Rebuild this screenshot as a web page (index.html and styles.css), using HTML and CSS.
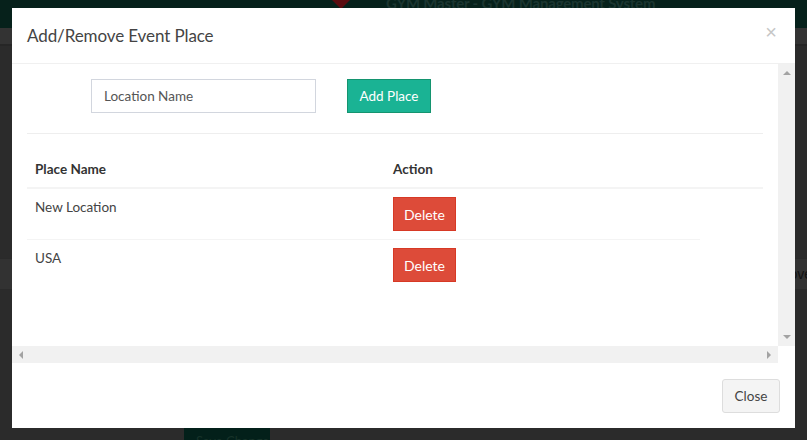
FILE: index.html
```html
<!DOCTYPE html>
<html>
<head>
<meta charset="utf-8">
<title>Add/Remove Event Place</title>
<link rel="stylesheet" href="styles.css">
</head>
<body>
<div class="page">
  <div class="topbar">
    <svg class="logo" width="20" height="10" viewBox="0 0 20 10"><path d="M0 0 H20 L10 10 Z" fill="#5a0c10"/></svg>
    <span class="brand">GYM Master - GYM Management System</span>
  </div>
  <div class="navband"></div>
  <div class="bgrow"><span>Remove</span></div>
  <div class="bgbtn">Save Changes</div>
</div>

<div class="modal">
  <div class="modal-header">
    <h4 class="modal-title">Add/Remove Event Place</h4>
    <span class="close">&times;</span>
  </div>
  <div class="modal-body">
    <div class="scroll-content">
      <div class="form-row">
        <input class="form-input" type="text" placeholder="Location Name">
        <button class="btn btn-add">Add Place</button>
      </div>
      <hr class="divider">
      <table class="places">
        <thead>
          <tr><th class="col-name">Place Name</th><th class="col-action">Action</th><th class="col-rest"></th></tr>
        </thead>
        <tbody>
          <tr><td>New Location</td><td><button class="btn btn-delete">Delete</button></td><td class="rest"></td></tr>
          <tr><td>USA</td><td><button class="btn btn-delete">Delete</button></td><td class="rest"></td></tr>
        </tbody>
      </table>
    </div>
    <div class="vbar">
      <span class="tri tri-up"></span>
      <span class="tri tri-down"></span>
    </div>
    <div class="hbar">
      <span class="tri tri-left"></span>
      <span class="tri tri-right"></span>
    </div>
    <div class="corner"></div>
  </div>
  <div class="modal-footer">
    <button class="btn btn-close">Close</button>
  </div>
</div>
</body>
</html>
```
FILE: styles.css
```css
* { box-sizing: border-box; }
html, body { margin: 0; padding: 0; }
body {
  width: 807px;
  height: 440px;
  overflow: hidden;
  background: #2b2b2b;
  font-family: "Lato", "Liberation Sans", sans-serif;
  font-size: 13.5px;
}

/* background page (dimmed) */
.page { height: 440px; overflow: hidden; }
.topbar {
  height: 28px;
  background: #06211b;
  display: flex;
  align-items: flex-end;
  padding-left: 331px;
  gap: 35px;
  overflow: hidden;
}
.logo { margin-bottom: 19px; }
.brand {
  font-weight: 700;
  font-size: 15px;
  letter-spacing: -0.2px;
  line-height: 16px;
  color: #1b3530;
  margin-bottom: 17px;
  white-space: nowrap;
}
.navband {
  height: 18px;
  background: #333333;
  border-bottom: 2px solid #262626;
}
.bgrow {
  margin-top: 212px;
  height: 32px;
  background: #323232;
  border-top: 1px solid #2a2a2a;
  border-bottom: 1px solid #2a2a2a;
  padding-left: 760px;
  display: flex;
  align-items: center;
  white-space: nowrap;
  overflow: hidden;
  color: #111;
  font-family: "Liberation Sans", sans-serif;
  font-size: 14px;
}
.bgbtn {
  margin-top: 138px;
  margin-left: 184px;
  width: 86px;
  height: 12px;
  overflow: hidden;
  background: #03201a;
  color: #163229;
  padding: 7px 12px 0;
  font-size: 13px;
  line-height: 13px;
  white-space: nowrap;
}

/* modal */
.modal {
  position: fixed;
  left: 12px;
  top: 8px;
  width: 783px;
  height: 420px;
  background: #fff;
  display: flex;
  flex-direction: column;
  color: #333;
}
.modal-header {
  height: 56px;
  padding: 0 15px;
  border-bottom: 1px solid #f0f0f0;
  display: flex;
  align-items: center;
  justify-content: space-between;
}
.modal-title {
  margin: 0;
  font-size: 17px;
  letter-spacing: -0.1px;
  font-weight: 400;
  color: #444;
}
.close {
  font-size: 20px;
  line-height: 20px;
  color: #c6c6c6;
  margin-right: 3px;
  margin-top: -8px;
  font-family: "Liberation Sans", sans-serif;
}

.modal-body {
  height: 299px;
  display: grid;
  grid-template-columns: 1fr 17px;
  grid-template-rows: 1fr 17px;
}
.scroll-content {
  padding: 15px 15px 0 15px;
  overflow: hidden;
}
.form-row {
  display: flex;
  gap: 31px;
  padding-left: 64px;
}
.form-input {
  width: 225px;
  height: 34px;
  border: 1px solid #d2d6de;
  padding: 6px 12px;
  font-family: inherit;
  font-size: 13.5px;
  color: #555;
  outline: none;
}
.form-input::placeholder { color: #555; }
.btn {
  font-family: inherit;
  font-size: 13.5px;
  height: 34px;
  padding: 6px 0;
  border: 1px solid transparent;
  border-radius: 0;
  white-space: nowrap;
  text-align: center;
  cursor: pointer;
}
.btn-add {
  background: #1ab394;
  border-color: #14946f;
  color: #fff;
  width: 84px;
}
.divider {
  margin: 20px 0 17px 0;
  border: 0;
  border-top: 1px solid #eeeeee;
}
.places {
  width: 100%;
  border-collapse: collapse;
}
.places th {
  text-align: left;
  font-weight: 700;
  color: #333;
  padding: 8px;
  line-height: 20px;
  border-bottom: 2px solid #f4f4f4;
}
.col-name { width: 358px; }
.col-action { width: 315px; }
.places td {
  padding: 8px;
  line-height: 20px;
  vertical-align: top;
  color: #444;
  border-top: 1px solid #f4f4f4;
}
.places td.rest { border-top: 0; }
.places tbody tr:first-child td { border-top: 0; }
.btn-delete {
  background: #dd4b39;
  border-color: #d73925;
  color: #fff;
  width: 63px;
  display: block;
  font-size: 14px;
}

/* custom scrollbars */
.vbar {
  background: #f1f1f1;
  display: flex;
  flex-direction: column;
  justify-content: space-between;
  align-items: center;
  padding: 7px 0 7px 0;
}
.hbar {
  background: #f1f1f1;
  display: flex;
  justify-content: space-between;
  align-items: center;
  padding: 0 7px;
}
.corner { background: #fff; }
.tri { width: 0; height: 0; display: block; }
.tri-up { border-left: 4px solid transparent; border-right: 4px solid transparent; border-bottom: 4px solid #a3a3a3; }
.tri-down { border-left: 4px solid transparent; border-right: 4px solid transparent; border-top: 4px solid #a3a3a3; }
.tri-left { border-top: 4px solid transparent; border-bottom: 4px solid transparent; border-right: 4px solid #a3a3a3; }
.tri-right { border-top: 4px solid transparent; border-bottom: 4px solid transparent; border-left: 4px solid #a3a3a3; }

.modal-footer {
  flex: 1;
  display: flex;
  justify-content: flex-end;
  align-items: flex-start;
  padding: 16px 15px 0 15px;
}
.btn-close {
  background: #f4f4f4;
  border: 1px solid #ddd;
  border-radius: 3px;
  color: #444;
  width: 58px;
}
```
